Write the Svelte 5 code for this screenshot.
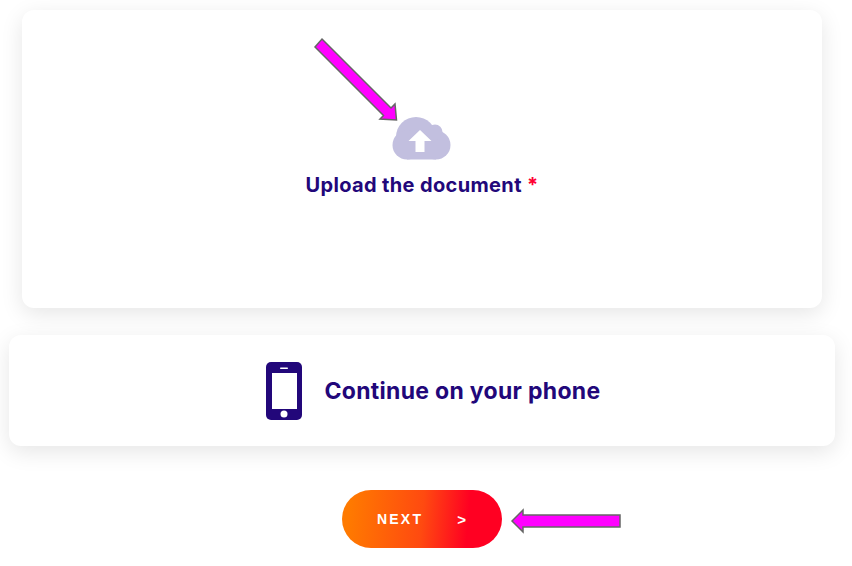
<script>
	const navy = '#22077a';
	const cloud = '#c2bfdf';
</script>

<main class="page">
	<section class="card upload">
		<svg class="cloud" width="60" height="44" viewBox="0 0 60 44" aria-hidden="true">
			<g fill={cloud}>
				<circle cx="24" cy="20" r="20" />
				<circle cx="15" cy="28" r="14.500" />
				<circle cx="44" cy="28" r="14.500" />
				<circle cx="43" cy="15" r="7.500" />
				<rect x="15" y="20" width="29" height="22.500" />
			</g>
			<path fill="#fff" d="M28 13L39.500 24H32.500V35H23.500V24H16.500Z" />
		</svg>
		<p class="label">Upload the document <span class="req">*</span></p>
	</section>

	<section class="card phone">
		<svg width="36" height="58" viewBox="0 0 36 58" aria-hidden="true">
			<rect width="36" height="58" rx="5" fill={navy} />
			<rect x="6" y="11" width="25" height="36" fill="#fff" />
			<rect x="14" y="5.500" width="8" height="1.500" rx="0.700" fill="#fff" />
			<circle cx="18" cy="52" r="3.500" fill="#fff" />
		</svg>
		<h2>Continue on your phone</h2>
	</section>

	<div class="actions">
		<button class="next"><span>NEXT</span><span class="chev">&gt;</span></button>
	</div>

	<!-- annotation arrows drawn over the page -->
	<svg class="marks" width="852" height="566" viewBox="0 0 852 566" aria-hidden="true">
		<polygon
			points="322,39 391,108 395,104 396.500,120 380,119 383.500,115.500 315,47"
			fill="#ff00ff"
			stroke="#666"
			stroke-width="1.500"
		/>
		<polygon
			points="512,521 523,510 523,515 620,515 620,527 523,527 523,532"
			fill="#ff00ff"
			stroke="#666"
			stroke-width="1.500"
		/>
	</svg>
</main>

<style>
	:global(body) {
		margin: 0;
		background: #fff;
	}

	.page {
		position: relative;
		width: 852px;
		height: 566px;
		padding-top: 10px;
		box-sizing: border-box;
		overflow: hidden;
		font-family: Inter, 'Noto Sans', sans-serif;
		color: #22077a;
	}

	.card {
		background: #fff;
		border-radius: 12px;
		box-shadow: 0 6px 22px rgba(0, 0, 0, 0.1);
		box-sizing: border-box;
	}

	.upload {
		width: 800px;
		height: 298px;
		margin-left: 22px;
		padding-top: 107px;
		display: flex;
		flex-direction: column;
		align-items: center;
	}

	.cloud {
		display: block;
	}

	.label {
		margin: 12px 0 0;
		font-size: 20px;
		font-weight: 700;
		line-height: 24px;
		letter-spacing: 0.35px;
	}

	.req {
		color: #ff0033;
	}

	.phone {
		width: 826px;
		height: 111px;
		margin: 27px 0 0 9px;
		padding-left: 22px;
		display: flex;
		align-items: center;
		justify-content: center;
		gap: 23px;
	}

	h2 {
		margin: 0;
		font-size: 23px;
		font-weight: 700;
		letter-spacing: 0.3px;
	}

	.actions {
		display: flex;
		justify-content: center;
		margin: 44px 0 0 -8px;
	}

	.next {
		width: 160px;
		height: 58px;
		border: 0;
		border-radius: 29px;
		padding: 0 35px;
		display: flex;
		align-items: center;
		justify-content: space-between;
		background: linear-gradient(95deg, #ff7a00 5%, #ff4a10 50%, #ff0022 78%);
		color: #fff;
		font: 700 14px 'Liberation Sans', Arial, sans-serif;
		letter-spacing: 2.2px;
	}

	.chev {
		font-size: 15px;
		letter-spacing: 1px;
	}

	.marks {
		position: absolute;
		left: 0;
		top: 0;
		pointer-events: none;
	}
</style>
